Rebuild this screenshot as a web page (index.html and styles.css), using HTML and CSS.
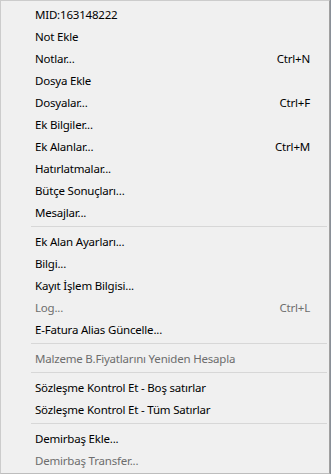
FILE: index.html
```html
<!DOCTYPE html>
<html lang="tr">
<head>
<meta charset="utf-8">
<title>Menu</title>
<link rel="stylesheet" href="styles.css">
</head>
<body>
<div class="menu">
  <div class="item"><span class="label">MID:163148222</span></div>
  <div class="item"><span class="label">Not Ekle</span></div>
  <div class="item"><span class="label">Notlar...</span><span class="key">Ctrl+N</span></div>
  <div class="item"><span class="label">Dosya Ekle</span></div>
  <div class="item"><span class="label">Dosyalar...</span><span class="key">Ctrl+F</span></div>
  <div class="item"><span class="label">Ek Bilgiler...</span></div>
  <div class="item"><span class="label">Ek Alanlar...</span><span class="key">Ctrl+M</span></div>
  <div class="item"><span class="label">Hatırlatmalar...</span></div>
  <div class="item"><span class="label">Bütçe Sonuçları...</span></div>
  <div class="item"><span class="label">Mesajlar...</span></div>
  <div class="sep"></div>
  <div class="item"><span class="label">Ek Alan Ayarları...</span></div>
  <div class="item"><span class="label">Bilgi...</span></div>
  <div class="item"><span class="label">Kayıt İşlem Bilgisi...</span></div>
  <div class="item disabled"><span class="label">Log...</span><span class="key">Ctrl+L</span></div>
  <div class="item"><span class="label">E-Fatura Alias Güncelle...</span></div>
  <div class="sep"></div>
  <div class="item disabled"><span class="label">Malzeme B.Fiyatlarını Yeniden Hesapla</span></div>
  <div class="sep"></div>
  <div class="item"><span class="label">Sözleşme Kontrol Et - Boş satırlar</span></div>
  <div class="item"><span class="label">Sözleşme Kontrol Et - Tüm Satırlar</span></div>
  <div class="sep"></div>
  <div class="item"><span class="label">Demirbaş Ekle...</span></div>
  <div class="item disabled"><span class="label">Demirbaş Transfer...</span></div>
</div>
</body>
</html>
```

FILE: styles.css
```css
html, body {
  margin: 0;
  padding: 0;
}
body {
  width: 331px;
  height: 474px;
  background: #8a9098;
  overflow: hidden;
}
.menu {
  box-sizing: border-box;
  width: 330px;
  height: 474px;
  background: #f0f0f0;
  border: 1px solid #cccccc;
  border-right-color: #a0a0a0;
  border-bottom-color: #bdbdbd;
  padding: 2px 0;
  font-family: "Noto Sans", "Liberation Sans", sans-serif;
  font-size: 11.5px;
  letter-spacing: -0.2px;
  color: #000000;
  display: flex;
  flex-direction: column;
}
.item {
  height: 22px;
  display: flex;
  align-items: center;
  justify-content: space-between;
  padding-left: 34px;
  padding-right: 19px;
  white-space: nowrap;
}
.disabled {
  color: #6d6d6d;
}
.sep {
  height: 7px;
  display: flex;
  align-items: center;
  padding-left: 30px;
  padding-right: 2px;
}
.sep::before {
  content: "";
  flex: 1;
  height: 1px;
  background: #d7d7d7;
}
```
